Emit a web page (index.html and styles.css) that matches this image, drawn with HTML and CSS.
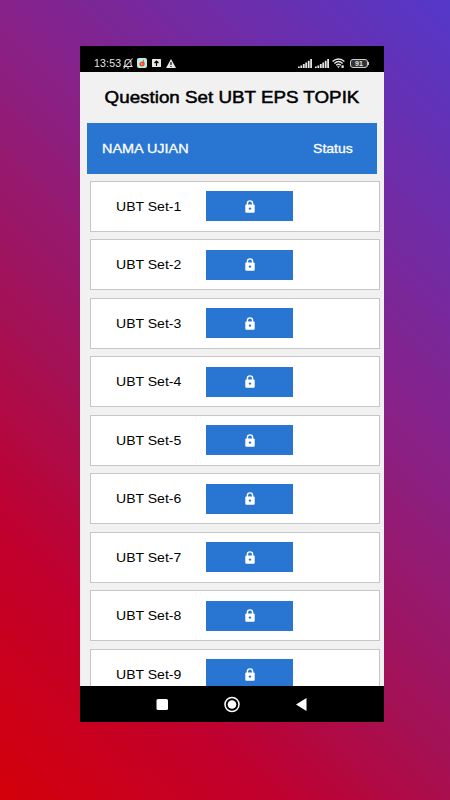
FILE: index.html
```html
<!DOCTYPE html>
<html lang="id">
<head>
    <meta charset="UTF-8">
    <meta name="viewport" content="width=device-width, initial-scale=1.0">
    <title>Question Set UBT EPS TOPIK</title>
    <link rel="stylesheet" href="styles.css">
</head>
<body>
    <!-- Shared icons -->
    <svg class="symbols" aria-hidden="true">
        <symbol id="lock" viewBox="0 0 10 13">
            <path d="M2.4 5.5V3.500a2.600 2.600 0 0 1 5.200 0V5.500" fill="none" stroke="#fff" stroke-width="1.400"/>
            <rect x="0.300" y="4.600" width="9.400" height="8.200" rx="1" fill="#fff"/>
            <circle cx="5" cy="8.600" r="1.200" fill="#2875d2"/>
        </symbol>
        <symbol id="signal" viewBox="0 0 14 9">
            <path d="M0 7.500h1.800V9H0zM2.400 6.500h1.800V9H2.400zM4.900 5h1.800v4H4.900zM7.300 3.500h1.800V9H7.300zM9.800 1.800h1.800V9H9.800zM12.200 0H14v9h-1.800z" fill="#e4e4e4"/>
        </symbol>
    </svg>

    <div class="phone">
        <div class="status-bar">
            <span class="time">13:53</span>
            <svg class="bell" viewBox="0 0 10 11">
                <path d="M1 8.500h8L8 7V4.500C8 2.500 6.800 1.500 5 1.500S2 2.500 2 4.500V7zM4 10h2M0.500 10.500L9.500 0.500" fill="none" stroke="#ddd" stroke-width="1.100"/>
            </svg>
            <svg class="app" viewBox="0 0 10 10">
                <rect width="10" height="10" rx="2" fill="#b5f0ee"/>
                <path d="M6.500 1L5.300 4 4 3.500C1.500 5 2 8.500 5 8.500S8.500 5 7 4z" fill="#e8502c"/>
                <circle cx="4.700" cy="6" r="0.800" fill="#ffc48c"/>
            </svg>
            <svg class="upload" viewBox="0 0 9 8">
                <rect width="9" height="8" rx="0.500" fill="#e8e8e8"/>
                <path d="M4.500 7V2M2.500 4l2-2 2 2" fill="none" stroke="#000" stroke-width="1.200"/>
            </svg>
            <svg class="warning" viewBox="0 0 10 9">
                <path d="M5 0l5 9H0z" fill="#e8e8e8"/>
                <path d="M5 3v3M5 7v1" stroke="#000" stroke-width="1.100"/>
            </svg>
            <div class="status-right">
                <svg class="signal"><use href="#signal"/></svg>
                <svg class="signal"><use href="#signal"/></svg>
                <svg class="wifi" viewBox="0 0 13 10">
                    <path d="M0.600 3.400c3.500-3.300 8.300-3.300 11.800 0M2.400 5.400c2.500-2.300 5.700-2.300 8.200 0M4.200 7.300c1.400-1.200 3.200-1.200 4.600 0" fill="none" stroke="#e4e4e4" stroke-width="1.400"/>
                    <path d="M5 8.200h3L6.500 10zM9.500 7.300h2.200V10H9.500z" fill="#e4e4e4"/>
                </svg>
                <div class="battery">91</div>
            </div>
        </div>

        <div class="content">
            <h1>Question Set UBT EPS TOPIK</h1>
            <div class="table-head">
                <span class="col-name">NAMA UJIAN</span>
                <span class="col-status">Status</span>
            </div>
            <div class="rows">
                <div class="row">
                    <span class="name">UBT Set-1</span>
                    <div class="btn"><svg><use href="#lock"/></svg></div>
                </div>
                <div class="row">
                    <span class="name">UBT Set-2</span>
                    <div class="btn"><svg><use href="#lock"/></svg></div>
                </div>
                <div class="row">
                    <span class="name">UBT Set-3</span>
                    <div class="btn"><svg><use href="#lock"/></svg></div>
                </div>
                <div class="row">
                    <span class="name">UBT Set-4</span>
                    <div class="btn"><svg><use href="#lock"/></svg></div>
                </div>
                <div class="row">
                    <span class="name">UBT Set-5</span>
                    <div class="btn"><svg><use href="#lock"/></svg></div>
                </div>
                <div class="row">
                    <span class="name">UBT Set-6</span>
                    <div class="btn"><svg><use href="#lock"/></svg></div>
                </div>
                <div class="row">
                    <span class="name">UBT Set-7</span>
                    <div class="btn"><svg><use href="#lock"/></svg></div>
                </div>
                <div class="row">
                    <span class="name">UBT Set-8</span>
                    <div class="btn"><svg><use href="#lock"/></svg></div>
                </div>
                <div class="row">
                    <span class="name">UBT Set-9</span>
                    <div class="btn"><svg><use href="#lock"/></svg></div>
                </div>
            </div>
        </div>

        <div class="nav-bar">
            <svg viewBox="0 0 304 36">
                <rect x="76.500" y="13" width="11.500" height="11" rx="1.500" fill="#fff"/>
                <circle cx="152" cy="18.500" r="7" fill="none" stroke="#fff" stroke-width="1.500"/>
                <circle cx="152" cy="18.500" r="4.300" fill="#fff"/>
                <path d="M216 18.500l10.500-6.500v13z" fill="#fff"/>
            </svg>
        </div>
    </div>
</body>
</html>
```
FILE: styles.css
```css
* {
    margin: 0;
    padding: 0;
    box-sizing: border-box;
}

body {
    height: 800px;
    padding: 46px 66px 0 80px;
    overflow: hidden;
    font-family: "Liberation Sans", Arial, sans-serif;
    background: linear-gradient(45deg, #d4000a 0%, #c0002e 22%, #a61052 38%, #86228a 64%, #5438c9 100%);
}

.symbols {
    display: none;
}

.phone {
    display: flex;
    flex-direction: column;
    width: 304px;
    height: 676px;
    background-color: #000;
}

/* Status bar */
.status-bar {
    display: flex;
    align-items: center;
    height: 26px;
    padding: 8px 16px 0 14px;
    color: #e4e4e4;
}

.time {
    width: 29px;
    font-size: 10.500px;
    letter-spacing: 0.200px;
    white-space: nowrap;
}

.bell {
    width: 10px;
    height: 11px;
}

.app {
    width: 10px;
    height: 10px;
    margin-left: 4px;
}

.upload {
    width: 9px;
    height: 8px;
    margin-left: 5px;
}

.warning {
    width: 10px;
    height: 9px;
    margin-left: 5px;
}

.status-right {
    display: flex;
    align-items: center;
    margin-left: auto;
}

.signal {
    width: 14px;
    height: 9px;
    margin-right: 3px;
}

.wifi {
    width: 13px;
    height: 10px;
    margin-right: 5px;
}

.battery {
    position: relative;
    width: 18px;
    height: 9px;
    border: 1px solid #ccc;
    border-radius: 3px;
    background-color: #333;
    font-size: 7px;
    font-weight: bold;
    line-height: 7px;
    text-align: center;
}

.battery::after {
    content: "";
    position: absolute;
    top: 2px;
    right: -2px;
    width: 1px;
    height: 3px;
    background-color: #ccc;
}

/* Page */
.content {
    height: 614px;
    overflow: hidden;
    background-color: #f1f1f1;
}

/* Widened lettering */
h1 {
    height: 51px;
    font-size: 17px;
    font-weight: normal;
    line-height: 51px;
    text-align: center;
    white-space: nowrap;
    transform: scaleX(1.105);
    -webkit-text-stroke: 0.5px #000;
}

.table-head {
    display: flex;
    justify-content: space-between;
    align-items: center;
    width: 290px;
    height: 51px;
    margin-left: 7px;
    padding: 0 24px 1px 15px;
    background-color: #2875d2;
    color: #fff;
    font-size: 13px;
    -webkit-text-stroke: 0.3px #fff;
}

.col-name {
    transform: scaleX(1.11);
    transform-origin: left;
}

.col-status {
    transform: scaleX(1.08);
    transform-origin: right;
}

.rows {
    display: flex;
    flex-direction: column;
    gap: 7.500px;
    padding: 6.500px 4px 0 10px;
}

.row {
    display: flex;
    align-items: center;
    flex-shrink: 0;
    height: 51px;
    padding-left: 25px;
    border: 1px solid #c6c6c6;
    background-color: #fff;
}

.name {
    width: 90px;
    font-size: 13px;
    color: #000;
    transform: scaleX(1.08);
    transform-origin: left;
}

.btn {
    display: flex;
    justify-content: center;
    align-items: center;
    width: 87px;
    height: 30px;
    background-color: #2875d2;
}

.btn svg {
    width: 10px;
    height: 13px;
}

/* Android buttons */
.nav-bar {
    height: 36px;
}

.nav-bar svg {
    display: block;
    width: 304px;
    height: 36px;
}
```
